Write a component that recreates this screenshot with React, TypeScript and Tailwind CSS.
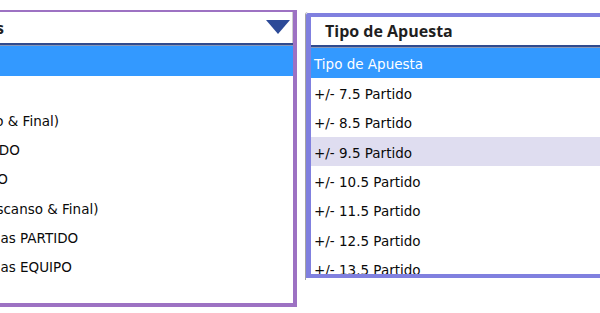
import React from 'react';

const mercados = [
  'Seleccione Mercado',
  'Resultado Final',
  'Ganador 1X2 (Descanso & Final)',
  'Más/Menos Goles PARTIDO',
  'Más/Menos Tiros EQUIPO',
  'Doble Oportunidad (Descanso & Final)',
  'Más/Menos Total Esquinas PARTIDO',
  'Más/Menos Total Esquinas EQUIPO',
  'Resultado Exacto',
];

const apuestas = [
  'Tipo de Apuesta',
  '+/- 7.5 Partido',
  '+/- 8.5 Partido',
  '+/- 9.5 Partido',
  '+/- 10.5 Partido',
  '+/- 11.5 Partido',
  '+/- 12.5 Partido',
  '+/- 13.5 Partido',
];

const listFont = "font-['DejaVu_Sans',sans-serif] text-[13.5px]";
const headFont = "font-['Open_Sans',sans-serif] text-[16px] font-bold text-[#1f1f1f]";

const App: React.FC = () => {
  return (
    <div className="flex h-[313px] w-[600px] overflow-hidden bg-white">
      {/* Mercados select, opened */}
      <div className="ml-[-163px] mt-[10px] flex h-[297px] w-[460px] shrink-0 flex-col border-t-2 border-r-4 border-b-4 border-[#9d72c3]">
        <div className="flex h-[31px] shrink-0 items-center border-r border-[#cfcfcf]">
          <span className={`w-[167px] text-right ${headFont}`}>Mercados</span>
          <div className="flex-1" />
          <svg width="24" height="15" viewBox="0 0 24 15" className="mr-[2px]">
            <polygon points="0,0 24,0 12,14" fill="#2c4a98" />
          </svg>
        </div>
        <div className="h-[2px] shrink-0 bg-[#2f4a8e]" />
        <div className="h-px shrink-0 bg-[#8797b8]" />
        <div className={`flex-1 overflow-hidden ${listFont}`}>
          {mercados.map((m, i) => (
            <div
              key={m}
              className={`flex items-center whitespace-nowrap pl-[3px] pt-[2px] ${
                i === 0 ? 'h-[30px] bg-[#3399ff] text-white' : 'h-[29.3px] text-[#0a0a0a]'
              }`}
            >
              {m}
            </div>
          ))}
        </div>
      </div>

      {/* Tipo de Apuesta select, opened */}
      <div className="ml-[8px] mt-[12px] h-[268px] w-[400px] shrink-0 rounded-tl-[3px] border-l border-[#a3a3a3]">
        <div className="mt-px flex h-[265px] flex-col rounded-tl-[3px] border-t-4 border-b-4 border-l-[5px] border-[#8080df]">
          <div className="flex h-[28px] shrink-0 items-center pl-[14px]">
            <span className={headFont}>Tipo de Apuesta</span>
          </div>
          <div className="h-[2px] shrink-0 bg-[#2f4a8e]" />
          <div className="h-px shrink-0 bg-[#8797b8]" />
          <div className={`flex-1 overflow-hidden ${listFont}`}>
            {apuestas.map((a, i) => (
              <div
                key={a}
                className={`flex items-center whitespace-nowrap pl-[3px] pt-[3px] ${
                  i === 0
                    ? 'ml-[-5px] h-[30px] bg-[#3399ff] pl-[8px] text-white'
                    : i === 3
                    ? 'h-[29.3px] bg-[#dfddf0] text-[#0a0a0a]'
                    : 'h-[29.3px] text-[#0a0a0a]'
                }`}
              >
                {a}
              </div>
            ))}
          </div>
        </div>
      </div>
    </div>
  );
};

export default App;
